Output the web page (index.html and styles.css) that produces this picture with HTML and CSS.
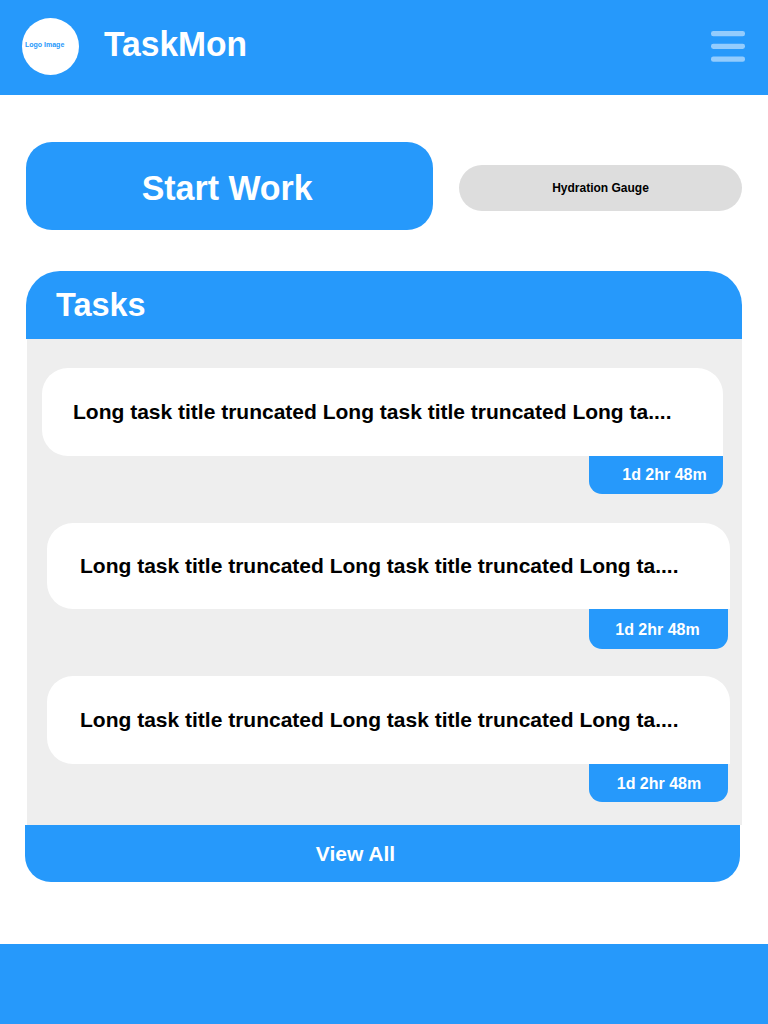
FILE: index.html
```html
<!DOCTYPE html>
<html lang="en">
<head>
<meta charset="utf-8">
<title>TaskMon</title>
<link rel="stylesheet" href="styles.css">
</head>
<body>
<header class="topbar">
  <div class="logo">Logo Image</div>
  <h1 class="brand">TaskMon</h1>
  <svg class="menu" width="34" height="32" viewBox="0 0 34 32" role="img" aria-label="Menu">
    <rect x="0" y="0" width="34" height="5.2" rx="2.3"/>
    <rect x="0" y="12.7" width="34" height="5.2" rx="2.3"/>
    <rect x="0" y="25.5" width="34" height="5.2" rx="2.3"/>
  </svg>
</header>
<main class="content">
  <section class="actions">
    <button class="start"><span class="start-label">Start Work</span></button>
    <div class="gauge">Hydration Gauge</div>
  </section>
  <section class="panel">
    <h2 class="panel-title"><span class="panel-label">Tasks</span></h2>
    <ul class="tasks">
      <li class="task task-first"><div class="task-card">Long task title truncated Long task title truncated Long ta....</div><div class="task-time">1d 2hr 48m</div></li>
      <li class="task task-second"><div class="task-card">Long task title truncated Long task title truncated Long ta....</div><div class="task-time">1d 2hr 48m</div></li>
      <li class="task task-third"><div class="task-card">Long task title truncated Long task title truncated Long ta....</div><div class="task-time">1d 2hr 48m</div></li>
    </ul>
    <button class="view-all">View All</button>
  </section>
</main>
<footer class="footer"></footer>
</body>
</html>
```

FILE: styles.css
```css
* { box-sizing: border-box; }
body {
  margin: 0;
  height: 1024px;
  display: flex;
  flex-direction: column;
  background: #fff;
  color: #000;
  font-family: "Liberation Sans", Arial, sans-serif;
  font-weight: 700;
}
button { border: 0; font: inherit; color: #fff; background: #2699fb; }
.topbar {
  height: 95px;
  padding: 18px 23px 0 22px;
  display: flex;
  align-items: flex-start;
  background: #2699fb;
}
.logo {
  width: 57px;
  height: 57px;
  padding: 22px 0 0 3px;
  border-radius: 50%;
  background: #fff;
  color: #2699fb;
  font-size: 7px;
  line-height: 9px;
  white-space: nowrap;
}
.brand {
  margin: 5px 0 0 25px;
  font-size: 35px;
  line-height: 42px;
  color: #fff;
  transform: scaleX(0.96);
  transform-origin: left;
}
.menu { margin: 13px 0 0 auto; fill: #93ccfd; }
.content { padding: 47px 26px 0; }
.actions { display: flex; justify-content: space-between; align-items: center; height: 88px; }
.start {
  width: 407px;
  height: 88px;
  padding: 3px 4px 0 0;
  border-radius: 26px;
  font-size: 35px;
}
.start-label { display: inline-block; transform: scaleX(0.97); }
.gauge {
  width: 283px;
  height: 46px;
  margin-top: 4px;
  border-radius: 23px;
  background: #ddd;
  font-size: 12px;
  line-height: 46px;
  text-align: center;
}
.panel { margin-top: 41px; }
.panel-title {
  margin: 0;
  height: 68px;
  padding-left: 30px;
  border-radius: 34px 34px 0 0;
  background: #2699fb;
  color: #fff;
  font-size: 34px;
  line-height: 66px;
}
.panel-label { display: inline-block; transform: scaleX(0.955); transform-origin: left; }
.tasks { list-style: none; margin: 0 0 0 1px; padding: 29px 0 0; height: 486px; background: #eee; }
.task { width: 683px; margin-left: 20px; height: 154px; }
.task-card {
  height: 88px;
  padding-left: 33px;
  border-radius: 26px 26px 0 26px;
  background: #fff;
  font-size: 21px;
  line-height: 88px;
  white-space: nowrap;
}
.task-time {
  width: 139px;
  height: 38px;
  margin-left: 542px;
  border-radius: 0 0 13px 13px;
  background: #2699fb;
  color: #fff;
  font-size: 16px;
  line-height: 38px;
  text-align: center;
}
.task-first { width: 681px; margin-left: 15px; height: 155px; }
.task-first .task-card { padding-left: 31px; }
.task-first .task-time { width: 134px; margin-left: 547px; padding-left: 17px; }
.task-second { height: 153px; }
.task-second .task-card { height: 86px; line-height: 86px; }
.task-second .task-time { height: 40px; line-height: 42px; padding-right: 2px; }
.task-third .task-time { line-height: 40px; padding-left: 1px; }
.view-all {
  display: block;
  width: 715px;
  height: 57px;
  margin-left: -1px;
  padding: 0 54px 0 0;
  border-radius: 0 0 26px 26px;
  font-size: 21px;
}
.footer { height: 80px; margin-top: auto; background: #2699fb; }
```
